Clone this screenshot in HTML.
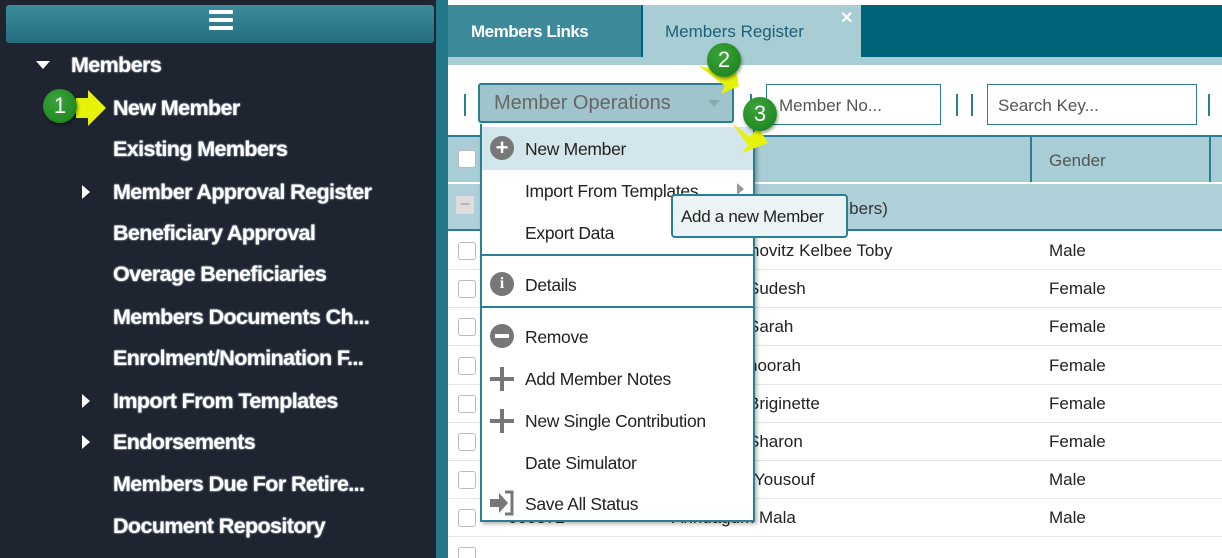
<!DOCTYPE html>
<html><head><meta charset="utf-8"><style>
*{margin:0;padding:0;box-sizing:border-box}
html,body{width:1222px;height:558px;overflow:hidden}
body{background:#fff;font-family:"Liberation Sans",sans-serif;position:relative}
.a{position:absolute}
.side{left:0;top:0;width:436px;height:558px;background:#1e2430}
.sbar{left:6px;top:5px;width:428px;height:38px;background:linear-gradient(#3d8c9c,#236e80);border-radius:3px}
.hb{left:209px;width:24px;height:4px;background:#fff;border-radius:1px}
.nav{color:#fff;font-weight:bold;font-size:21.5px;letter-spacing:-0.6px;text-shadow:0 0 2px #9ab,0 0 1px #fff;white-space:nowrap}
.tri{width:0;height:0}
.strip{left:436px;top:0;width:12px;height:558px;background:#22788a}
.tabs{left:448px;top:5px;width:774px;height:52px;background:#006478}
.sub{left:448px;top:57px;width:774px;height:8px;background:#a9cdd5}
.tb{white-space:nowrap}
.row{left:448px;width:774px;height:38px;border-bottom:1px solid #e2e6e8;font-size:17px;color:#222}
.cb{width:18px;height:18px;border:1px solid #bbb;border-radius:3px;background:#fff;left:10px;top:10px}
.mi{left:43px;font-size:17.5px;letter-spacing:-0.3px;color:#222;white-space:nowrap}
.ic{left:8px;width:24px;height:24px;border-radius:50%;background:#777;color:#fff;font-weight:bold;text-align:center}
.num{width:34px;height:34px;border-radius:50%;background:radial-gradient(circle at 40% 35%,#3aa53a,#1a7d1a);color:#fff;font-size:22px;text-align:center;line-height:34px;box-shadow:1px 2px 3px rgba(0,0,0,.4)}
</style></head><body>
<div class="a side"></div>
<div class="a sbar"></div>
<div class="a hb" style="top:10px"></div><div class="a hb" style="top:18px"></div><div class="a hb" style="top:26px"></div>
<div class="a tri" style="left:36px;top:61px;border-left:7px solid transparent;border-right:7px solid transparent;border-top:8px solid #fff"></div>
<div class="a nav" style="left:71px;top:53px">Members</div>
<div class="a nav" style="left:113px;top:96px">New Member</div>
<div class="a nav" style="left:113px;top:137px">Existing Members</div>
<div class="a tri" style="left:82px;top:185px;border-top:7px solid transparent;border-bottom:7px solid transparent;border-left:8px solid #fff"></div>
<div class="a nav" style="left:113px;top:180px">Member Approval Register</div>
<div class="a nav" style="left:113px;top:221px">Beneficiary Approval</div>
<div class="a nav" style="left:113px;top:262px">Overage Beneficiaries</div>
<div class="a nav" style="left:113px;top:305px">Members Documents Ch...</div>
<div class="a nav" style="left:113px;top:346px">Enrolment/Nomination F...</div>
<div class="a tri" style="left:82px;top:394px;border-top:7px solid transparent;border-bottom:7px solid transparent;border-left:8px solid #fff"></div>
<div class="a nav" style="left:113px;top:389px">Import From Templates</div>
<div class="a tri" style="left:82px;top:435px;border-top:7px solid transparent;border-bottom:7px solid transparent;border-left:8px solid #fff"></div>
<div class="a nav" style="left:113px;top:430px">Endorsements</div>
<div class="a nav" style="left:113px;top:472px">Members Due For Retire...</div>
<div class="a nav" style="left:113px;top:514px">Document Repository</div>
<svg class="a" style="left:70px;top:88px" width="38" height="40"><polygon points="6,10 18,10 18,2 36,20 18,38 18,30 6,30" fill="#e6f20a"/></svg>
<div class="a num" style="left:43px;top:89px">1</div>

<div class="a strip"></div>
<div class="a tabs"></div>
<div class="a" style="left:448px;top:5px;width:193px;height:52px;background:#3d8a9b"></div>
<div class="a tb" style="left:471px;top:22px;color:#fff;font-weight:bold;font-size:17px;letter-spacing:-0.5px">Members Links</div>
<div class="a" style="left:643px;top:5px;width:218px;height:52px;background:#a9cdd5"></div>
<div class="a tb" style="left:665px;top:22px;color:#1d5f73;font-size:17px">Members Register</div>
<div class="a" style="left:840px;top:8px;color:#fff;font-size:16px;font-weight:bold">✕</div>
<div class="a sub"></div>

<div class="a" style="left:464px;top:94px;width:2px;height:22px;background:#2a7f90"></div>
<div class="a" style="left:478px;top:83px;width:256px;height:40px;background:#9fc4cc;border:2px solid #2a7f90;border-radius:3px"></div>
<div class="a tb" style="left:494px;top:92px;color:#666;font-size:20px">Member Operations</div>
<div class="a tri" style="left:708px;top:100px;border-left:6px solid transparent;border-right:6px solid transparent;border-top:7px solid #8aa"></div>
<div class="a" style="left:750px;top:94px;width:2px;height:22px;background:#2a7f90"></div>
<div class="a" style="left:766px;top:84px;width:175px;height:41px;border:1px solid #2a7f90"></div>
<div class="a tb" style="left:779px;top:96px;color:#555;font-size:17px">Member No...</div>
<div class="a" style="left:956px;top:94px;width:2px;height:22px;background:#2a7f90"></div>
<div class="a" style="left:971px;top:94px;width:2px;height:22px;background:#2a7f90"></div>
<div class="a" style="left:987px;top:84px;width:210px;height:41px;border:1px solid #2a7f90"></div>
<div class="a tb" style="left:998px;top:96px;color:#555;font-size:17px">Search Key...</div>
<div class="a" style="left:1208px;top:94px;width:2px;height:22px;background:#2a7f90"></div>

<div class="a" style="left:448px;top:135px;width:774px;height:47px;background:#a9cdd5;border-top:2px solid #2a7f90"></div>
<div class="a" style="left:1030px;top:137px;width:2px;height:45px;background:#2a7f90"></div>
<div class="a" style="left:1209px;top:137px;width:2px;height:45px;background:#2a7f90"></div>
<div class="a cb" style="left:458px;top:150px"></div>
<div class="a tb" style="left:1049px;top:151px;color:#555;font-size:17px">Gender</div>
<div class="a" style="left:448px;top:183px;width:774px;height:48px;background:#afd0d8;border-top:1px solid #fff;border-bottom:2px solid #2a7f90"></div>
<div class="a" style="left:456px;top:196px;width:18px;height:18px;background:#ddd;color:#999;text-align:center;line-height:16px">–</div>
<div class="a tb" style="left:835px;top:199px;color:#333;font-size:17px">mbers)</div>

<div class="a row" style="top:232px"><div class="a cb"></div><div class="a" style="left:302px;top:9px">novitz Kelbee Toby</div><div class="a" style="left:601px;top:9px">Male</div></div>
<div class="a row" style="top:270px"><div class="a cb"></div><div class="a" style="left:300px;top:9px">Sudesh</div><div class="a" style="left:601px;top:9px">Female</div></div>
<div class="a row" style="top:308px"><div class="a cb"></div><div class="a" style="left:300px;top:9px">Sarah</div><div class="a" style="left:601px;top:9px">Female</div></div>
<div class="a row" style="top:347px"><div class="a cb"></div><div class="a" style="left:300px;top:9px">hoorah</div><div class="a" style="left:601px;top:9px">Female</div></div>
<div class="a row" style="top:385px"><div class="a cb"></div><div class="a" style="left:300px;top:9px">Briginette</div><div class="a" style="left:601px;top:9px">Female</div></div>
<div class="a row" style="top:423px"><div class="a cb"></div><div class="a" style="left:300px;top:9px">Sharon</div><div class="a" style="left:601px;top:9px">Female</div></div>
<div class="a row" style="top:461px"><div class="a cb"></div><div class="a" style="left:306px;top:9px">Yousouf</div><div class="a" style="left:601px;top:9px">Male</div></div>
<div class="a row" style="top:499px"><div class="a cb"></div><div class="a" style="left:60px;top:9px">000872</div><div class="a" style="left:224px;top:9px">Annuagum Mala</div><div class="a" style="left:601px;top:9px">Male</div></div>
<div class="a row" style="top:537px"><div class="a cb"></div></div>

<div class="a" style="left:480px;top:124px;width:275px;height:398px;background:#fff;border:2px solid #2a7f90;border-top:none;box-shadow:2px 2px 4px rgba(0,0,0,.3)">
 <div class="a" style="left:0;top:3px;width:271px;height:43px;background:#d3e6eb"></div>
 <div class="a ic" style="top:12px;font-size:22px;line-height:24px">+</div><div class="a mi" style="top:15px">New Member</div>
 <div class="a mi" style="top:57px">Import From Templates</div>
 <div class="a tri" style="left:255px;top:59px;border-top:6px solid transparent;border-bottom:6px solid transparent;border-left:7px solid #999"></div>
 <div class="a mi" style="top:99px">Export Data</div>
 <div class="a" style="left:0;top:130px;width:271px;height:2px;background:#2a7f90"></div>
 <div class="a ic" style="top:148px;font-size:16px;line-height:24px;font-family:'Liberation Serif',serif">i</div><div class="a mi" style="top:151px">Details</div>
 <div class="a" style="left:0;top:182px;width:271px;height:2px;background:#2a7f90"></div>
 <div class="a ic" style="top:200px"><div class="a" style="left:5px;top:10px;width:14px;height:4px;background:#fff"></div></div><div class="a mi" style="top:203px">Remove</div>
 <div class="a" style="left:8px;top:253px;width:24px;height:4px;background:#777"></div><div class="a" style="left:18px;top:243px;width:4px;height:24px;background:#777"></div><div class="a mi" style="top:245px">Add Member Notes</div>
 <div class="a" style="left:8px;top:295px;width:24px;height:4px;background:#777"></div><div class="a" style="left:18px;top:285px;width:4px;height:24px;background:#777"></div><div class="a mi" style="top:287px">New Single Contribution</div>
 <div class="a mi" style="top:329px">Date Simulator</div>
 <svg class="a" style="left:6px;top:366px" width="28" height="26"><path d="M2 9h9V3l9 10-9 10v-6H2z" fill="#777"/><path d="M17 2h7v22h-7" fill="none" stroke="#777" stroke-width="3"/></svg><div class="a mi" style="top:370px">Save All Status</div>
</div>
<div class="a" style="left:671px;top:194px;width:177px;height:44px;background:#ecf3f5;border:2px solid #2a7f90;border-radius:4px"></div>
<div class="a tb" style="left:681px;top:207px;color:#222;font-size:17px;letter-spacing:-0.3px">Add a new Member</div>

<svg class="a" style="left:695px;top:60px" width="50" height="40"><polygon points="4,6 40,14 40,6 44,26 26,34 30,26" fill="#e6f20a"/></svg>
<div class="a num" style="left:707px;top:43px">2</div>
<svg class="a" style="left:728px;top:115px" width="50" height="42"><polygon points="4,8 22,22 30,12 40,28 14,38 20,30" fill="#e6f20a"/></svg>
<div class="a num" style="left:743px;top:97px">3</div>
</body></html>
